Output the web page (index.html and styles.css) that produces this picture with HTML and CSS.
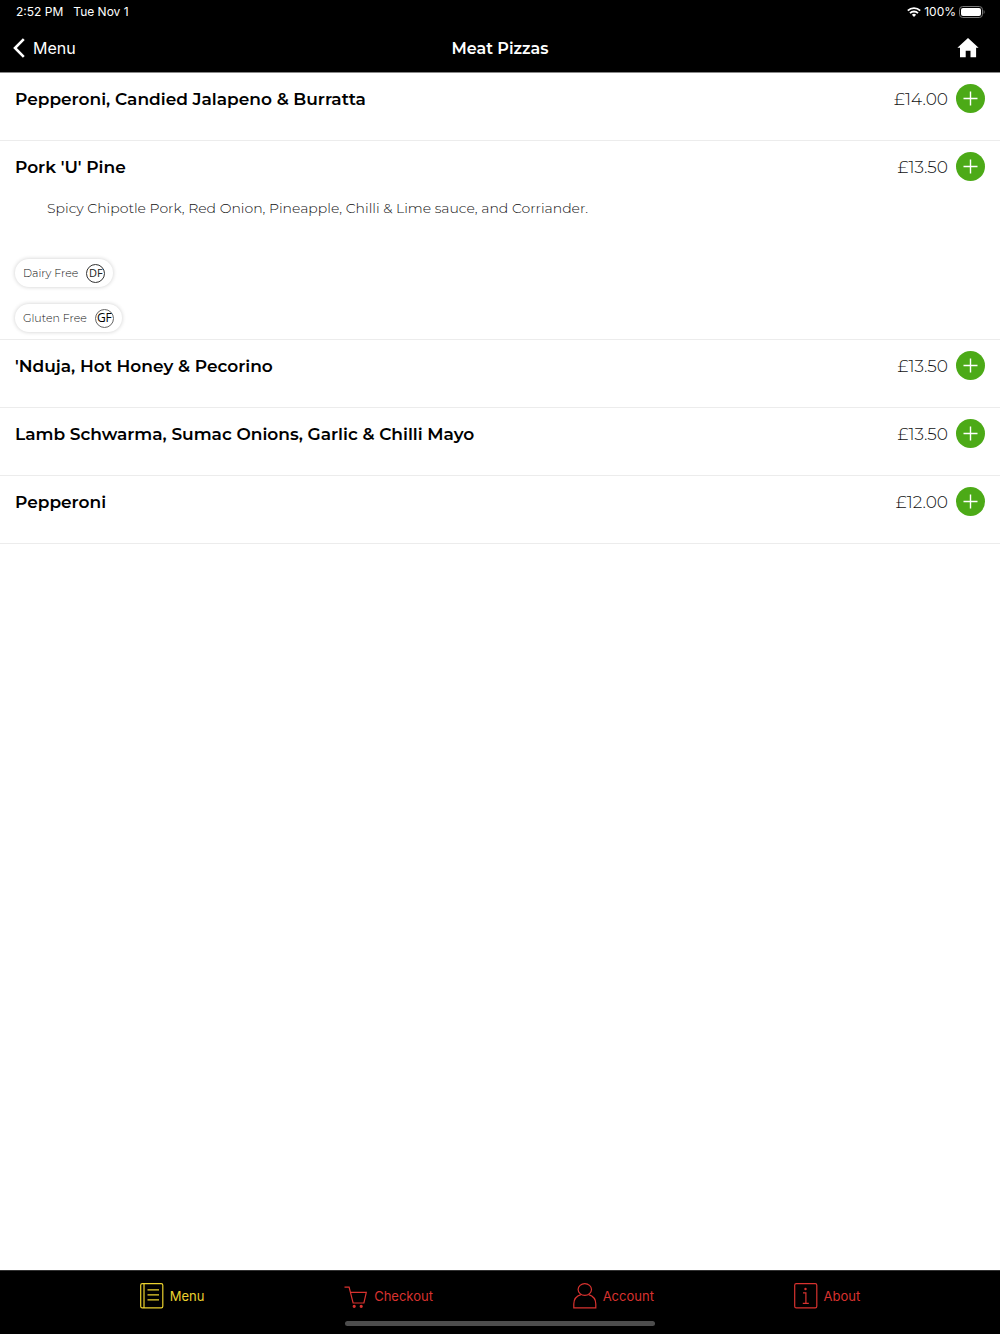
FILE: index.html
```html
<!DOCTYPE html>
<html lang="en">
<head>
    <meta charset="UTF-8">
    <meta name="viewport" content="width=device-width, initial-scale=1.0">
    <title>Meat Pizzas</title>
    <link rel="stylesheet" href="styles.css">
</head>
<body>
    <header>
        <div class="status-bar">
            <div class="status-left">
                <span>2:52 PM</span>
                <span>Tue Nov 1</span>
            </div>
            <div class="status-right">
                <svg width="14" height="10" viewBox="0 0 14 10" fill="none" stroke="#fff" stroke-width="1.8">
                    <path d="M0.8 3.7a8.8 8.8 0 0 1 12.4 0"/>
                    <path d="M3 6.2a5.6 5.6 0 0 1 8 0"/>
                    <path d="M7 10L4.9 7.8a3 3 0 0 1 4.2 0z" fill="#fff" stroke="none"/>
                </svg>
                <span>100%</span>
                <svg width="26" height="12" viewBox="0 0 26 12">
                    <rect x="0.5" y="0.5" width="23" height="11" rx="3.2" fill="none" stroke="#777"/>
                    <rect x="2" y="2" width="20" height="8" rx="2" fill="#fff"/>
                    <path d="M24.7 4v4c1.2-.6 1.2-3.4 0-4z" fill="#777"/>
                </svg>
            </div>
        </div>
        <nav class="nav-bar">
            <a class="back" href="#">
                <svg width="12" height="20" viewBox="0 0 12 20" fill="none" stroke="#fff" stroke-width="2.6">
                    <path d="M10.8 1.2L2 10l8.8 8.8"/>
                </svg>
                <span>Menu</span>
            </a>
            <h1>Meat Pizzas</h1>
            <a class="home" href="#" aria-label="Home">
                <svg width="22" height="20" viewBox="0 0 22 20" fill="#fff">
                    <path d="M11 0L21.6 9.8h-2.5v9.4h-5.6v-6.5H8.7v6.5H3V9.8H0.4z"/>
                </svg>
            </a>
        </nav>
    </header>

    <main>
        <article class="item">
            <div class="item-row">
                <h2>Pepperoni, Candied Jalapeno &amp; Burratta</h2>
                <span class="price">£14.00</span>
                <button class="add" aria-label="Add"><svg width="15" height="15" viewBox="0 0 15 15"><path d="M7.5 0.5v14M0.5 7.5h14"/></svg></button>
            </div>
        </article>

        <article class="item item-full">
            <div class="item-row">
                <h2>Pork 'U' Pine</h2>
                <span class="price">£13.50</span>
                <button class="add" aria-label="Add"><svg width="15" height="15" viewBox="0 0 15 15"><path d="M7.5 0.5v14M0.5 7.5h14"/></svg></button>
            </div>
            <p class="description">Spicy Chipotle Pork, Red Onion, Pineapple, Chilli &amp; Lime sauce, and Corriander.</p>
            <div class="tags">
                <div class="tag">Dairy Free <span class="badge">DF</span></div>
                <div class="tag">Gluten Free <span class="badge badge-gf">GF</span></div>
            </div>
        </article>

        <article class="item">
            <div class="item-row">
                <h2>'Nduja, Hot Honey &amp; Pecorino</h2>
                <span class="price">£13.50</span>
                <button class="add" aria-label="Add"><svg width="15" height="15" viewBox="0 0 15 15"><path d="M7.5 0.5v14M0.5 7.5h14"/></svg></button>
            </div>
        </article>

        <article class="item">
            <div class="item-row">
                <h2>Lamb Schwarma, Sumac Onions, Garlic &amp; Chilli Mayo</h2>
                <span class="price">£13.50</span>
                <button class="add" aria-label="Add"><svg width="15" height="15" viewBox="0 0 15 15"><path d="M7.5 0.5v14M0.5 7.5h14"/></svg></button>
            </div>
        </article>

        <article class="item">
            <div class="item-row">
                <h2>Pepperoni</h2>
                <span class="price">£12.00</span>
                <button class="add" aria-label="Add"><svg width="15" height="15" viewBox="0 0 15 15"><path d="M7.5 0.5v14M0.5 7.5h14"/></svg></button>
            </div>
        </article>
    </main>

    <footer>
        <nav class="tabs">
            <a class="tab active" href="#">
                <svg width="24" height="26" viewBox="0 0 24 26">
                    <rect x="0.7" y="0.7" width="22.1" height="24.2" rx="1.6"/>
                    <path d="M4 0.7v24.2M7.5 6.8h11.5M7.5 11.8h11.5M7.5 16.9h11.5"/>
                </svg>
                <span>Menu</span>
            </a>
            <a class="tab" href="#">
                <svg width="24" height="26" viewBox="0 0 24 26">
                    <path d="M0.5 4.2h4.6l4 15.8h10.8l2.4-10.6H6.4"/>
                    <circle cx="10.2" cy="23.3" r="1" class="dot"/>
                    <circle cx="17.2" cy="23.3" r="1" class="dot"/>
                </svg>
                <span>Checkout</span>
            </a>
            <a class="tab" href="#">
                <svg width="24" height="26" viewBox="0 0 24 26">
                    <ellipse cx="11.8" cy="6.5" rx="6.7" ry="5.8"/>
                    <path d="M8 11.7C3.6 13 0.8 16.5 0.8 21v3.9h22V21c0-4.5-2.8-8-7.2-9.3"/>
                </svg>
                <span>Account</span>
            </a>
            <a class="tab" href="#">
                <svg width="24" height="26" viewBox="0 0 24 26">
                    <rect x="0.7" y="0.7" width="22.1" height="24.2" rx="1.6"/>
                    <path d="M9 9.8h2.9v10.5M8.8 20.3h6"/>
                    <circle cx="11.5" cy="6" r="0.6" class="dot"/>
                </svg>
                <span>About</span>
            </a>
        </nav>
        <div class="home-indicator"></div>
    </footer>
</body>
</html>
```
FILE: styles.css
```css
* {
    box-sizing: border-box;
}

body {
    font-family: Montserrat, Inter, sans-serif;
    margin: 0;
    min-height: 100vh;
    display: flex;
    flex-direction: column;
    background: #fff;
    color: #000;
}

a {
    color: inherit;
    text-decoration: none;
}

svg {
    display: block;
}

h1, h2, p {
    margin: 0;
}

header {
    background: #000;
    color: #fff;
    border-bottom: 1px solid #888;
}

.status-bar {
    display: flex;
    justify-content: space-between;
    height: 24px;
    padding: 0 15px 0 16px;
    font-family: Inter, sans-serif;
    font-size: 12px;
    line-height: 24px;
    font-weight: 400;
}

.status-left {
    display: flex;
    gap: 10px;
}

.status-right {
    display: flex;
    align-items: center;
    gap: 3px;
}

.nav-bar {
    display: grid;
    grid-template-columns: 1fr auto 1fr;
    align-items: center;
    height: 48px;
    padding: 0 13px;
}

.back {
    display: flex;
    align-items: center;
    gap: 8px;
    font-family: Inter, sans-serif;
    font-size: 16px;
}

h1 {
    font-size: 16px;
    font-weight: 600;
}

.home {
    justify-self: end;
    margin-right: 8px;
}

main {
    flex: 1;
}

.item {
    padding: 11px 15px 27px;
    border-bottom: 1px solid #ececec;
}

.item-full {
    padding-bottom: 7px;
}

.item-row {
    display: flex;
    align-items: center;
}

h2 {
    flex: 1;
    font-size: 17px;
    line-height: 24px;
    font-weight: 600;
}

.price {
    font-size: 17px;
    font-weight: 300;
    margin-right: 8px;
    color: #111;
}

.add {
    display: flex;
    align-items: center;
    justify-content: center;
    width: 29px;
    height: 29px;
    padding: 0;
    border: none;
    border-radius: 50%;
    background: #4caa17;
    cursor: pointer;
}

.add path {
    stroke: #fff;
    stroke-width: 1.4;
}

.description {
    margin: 17px 32px 40px;
    font-size: 14px;
    line-height: 21px;
    font-weight: 300;
    color: #111;
}

.tags {
    display: flex;
    flex-direction: column;
    align-items: flex-start;
    gap: 17px;
}

.tag {
    display: flex;
    align-items: center;
    gap: 8px;
    height: 28px;
    padding: 0 8px;
    border-radius: 14px;
    box-shadow: 0 0 4px rgba(0, 0, 0, 0.2);
    font-size: 11px;
    font-weight: 300;
    color: #111;
}

.badge {
    display: flex;
    align-items: center;
    justify-content: center;
    width: 19px;
    height: 19px;
    border: 1px solid #333;
    border-radius: 50%;
    font-family: "Open Sans", sans-serif;
    font-size: 11px;
    line-height: 16px;
    font-weight: 400;
    color: #222;
}

.badge-gf {
    border-color: #666;
    font-size: 12px;
    font-weight: 500;
    color: #000;
}

footer {
    background: #000;
    border-top: 1px solid #333;
    padding-bottom: 8px;
}

.tabs {
    display: flex;
    justify-content: space-evenly;
    height: 50px;
}

.tab {
    display: flex;
    align-items: center;
    gap: 6px;
    font-family: Inter, sans-serif;
    font-size: 13px;
    color: #d8322f;
}

.tab.active {
    color: #ecd22e;
}

.tab svg {
    fill: none;
    stroke: currentColor;
    stroke-width: 1.2;
}

.tab .dot {
    fill: currentColor;
}

.home-indicator {
    width: 31%;
    height: 5px;
    margin: 0 auto;
    border-radius: 3px;
    background: #4d4d4d;
}
```
